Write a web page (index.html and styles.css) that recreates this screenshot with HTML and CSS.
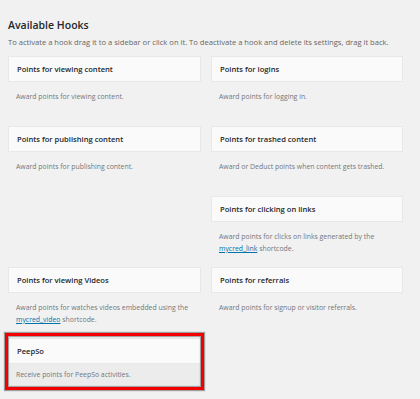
FILE: index.html
```html
<!DOCTYPE html>
<html>
<head>
<meta charset="utf-8">
<link rel="stylesheet" href="styles.css">
</head>
<body>
<div class="wrap">
  <h2 class="title">Available Hooks</h2>
  <p class="intro">To activate a hook drag it to a sidebar or click on it. To deactivate a hook and delete its settings, drag it back.</p>
  <div class="hooks">
    <div class="hook">
      <div class="hook-head">Points for viewing content</div>
      <div class="hook-desc">Award points for viewing content.</div>
    </div>
    <div class="hook">
      <div class="hook-head">Points for logins</div>
      <div class="hook-desc">Award points for logging in.</div>
    </div>
    <div class="hook">
      <div class="hook-head">Points for publishing content</div>
      <div class="hook-desc">Award points for publishing content.</div>
    </div>
    <div class="hook">
      <div class="hook-head">Points for trashed content</div>
      <div class="hook-desc">Award or Deduct points when content gets trashed.</div>
    </div>
    <div class="hook hook-right">
      <div class="hook-head">Points for clicking on links</div>
      <div class="hook-desc">Award points for clicks on links generated by the <a href="#">mycred_link</a> shortcode.</div>
    </div>
    <div class="hook">
      <div class="hook-head">Points for viewing Videos</div>
      <div class="hook-desc">Award points for watches videos embedded using the <a href="#">mycred_video</a> shortcode.</div>
    </div>
    <div class="hook">
      <div class="hook-head">Points for referrals</div>
      <div class="hook-desc">Award points for signup or visitor referrals.</div>
    </div>
    <div class="hook hook-marked">
      <div class="hook-head">PeepSo</div>
      <div class="hook-desc">Receive points for PeepSo activities.</div>
    </div>
  </div>
</div>
</body>
</html>
```

FILE: styles.css
```css
html, body {
  margin: 0;
  padding: 0;
  background: #f1f1f1;
}
body {
  font-family: "Open Sans", "Noto Sans", sans-serif;
  color: #444;
  width: 420px;
  height: 399px;
  overflow: hidden;
}
.wrap {
  padding: 18px 0 0 8px;
}
.title {
  margin: 0;
  font-size: 10.5px;
  font-weight: 600;
  color: #23282d;
  line-height: 14px;
}
.intro {
  margin: 5px 0 0;
  font-size: 7.6px;
  line-height: 11px;
  color: #666;
}
.hooks {
  display: grid;
  grid-template-columns: 193px 192px;
  grid-template-rows: 70px 70px 71px 71px auto;
  column-gap: 10px;
  margin-top: 8px;
}
.hook-right {
  grid-column: 2;
}
.hook-head {
  height: 26px;
  box-sizing: border-box;
  background: #fafafa;
  border: 1px solid #e8e8e8;
  padding: 0 8px;
  font-size: 7.6px;
  font-weight: 600;
  color: #23282d;
  line-height: 24px;
}
.hook-desc {
  padding: 9px 8px 0;
  font-size: 6.9px;
  line-height: 11.5px;
  color: #72777c;
}
.hook-desc a {
  color: #0073aa;
  text-decoration: underline;
}
.hook-marked {
  position: relative;
  align-self: start;
}
.hook-marked .hook-desc {
  background: #ececec;
  padding: 5px 8px 6px;
}
.hook-marked::after {
  content: "";
  position: absolute;
  left: -3px;
  top: -5px;
  right: -3px;
  bottom: -3px;
  border: 3px solid #f20000;
  box-shadow: 0 0 1px 1px rgba(0,0,0,0.35), inset 0 0 1px 1px rgba(0,0,0,0.35);
}
```
